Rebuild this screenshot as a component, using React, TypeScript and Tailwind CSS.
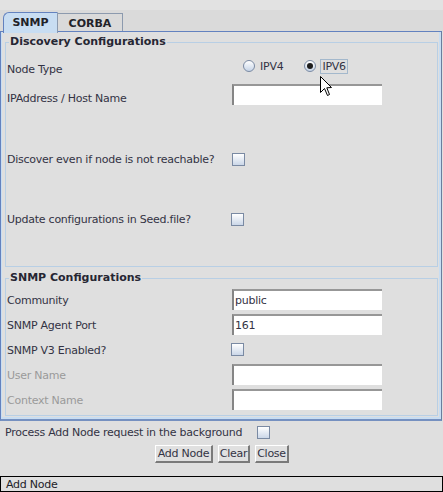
import React from "react";

const Checkbox = ({ className = "" }: { className?: string }) => (
  <div
    className={`w-[13px] h-[13px] shrink-0 border border-[#7a8aa3] bg-linear-to-b from-white to-[#cbd7e8] ${className}`}
  />
);

const Radio = ({ checked = false }: { checked?: boolean }) => (
  <div className="w-[12px] h-[12px] shrink-0 rounded-full border border-[#7a8aa3] bg-linear-to-b from-white to-[#c6d4e7] flex items-center justify-center">
    {checked && <div className="w-[6px] h-[6px] rounded-full bg-[#1e1e1e]" />}
  </div>
);

const Field = ({ value = "" }: { value?: string }) => (
  <div className="w-[150px] h-[21px] shrink-0 bg-white border-t-2 border-l-2 border-t-[#979797] border-l-[#858585] flex items-center pl-[1px] text-[#333344]">
    {value}
  </div>
);

const Row = ({
  label,
  children,
  className = "",
  labelClass = "",
}: {
  label: string;
  children: React.ReactNode;
  className?: string;
  labelClass?: string;
}) => (
  <div className={`flex items-center ${className}`}>
    <div className={`w-[226px] shrink-0 pl-[1px] whitespace-nowrap ${labelClass}`}>{label}</div>
    {children}
  </div>
);

export default function App() {
  return (
    <div className="relative w-[443px] h-[492px] overflow-hidden bg-[#dfdfdf] font-['DejaVu_Sans',Verdana,sans-serif] text-[11px] leading-[13px] tracking-[-0.25px] text-[#333344] flex flex-col">
      {/* top strip */}
      <div className="h-[10px] shrink-0 bg-[#e2e2e2]" />
      {/* tab row */}
      <div className="h-[21px] shrink-0 bg-[#dadada] flex items-end relative z-10">
        <div className="ml-[3px] -mb-[2px] w-[55px] h-[21px] rounded-tl-[6px] border-t border-l border-r border-t-[#6382bf] border-l-[#6382bf] border-r-[#8c9aae] bg-[#c8ddf2] flex items-center justify-center pb-[1px] font-bold tracking-normal text-[#222228]">
          SNMP
        </div>
        <div className="w-[65px] h-[18px] border-t border-r border-[#8c9aae] bg-[#dadada] flex items-center justify-center pt-[1px] font-bold tracking-normal text-[#222228]">
          CORBA
        </div>
      </div>

      {/* content panel */}
      <div className="w-[442px] h-[390px] shrink-0 border-t border-l border-r border-b-2 border-t-[#6382bf] border-l-[#6382bf] border-r-[#6a7d9e] border-b-[#7590c0] shadow-[inset_1px_0_0_#c8ddf2,inset_-2px_-2px_0_#c8ddf2]">
        <fieldset className="ml-[4px] mt-[3px] w-[433px] border border-[#b8cfe5] pb-[37px]">
          <legend className="ml-[3px] px-[1px] font-bold tracking-normal leading-[14px] text-[#262633]">
            Discovery Configurations
          </legend>
          <Row label="Node Type" className="mt-[7px] h-[20px]" labelClass="pt-[6px]">
            <div className="ml-[11px] flex items-center">
              <Radio />
              <span className="ml-[5px]">IPV4</span>
              <div className="ml-[21px]">
                <Radio checked />
              </div>
              <span className="ml-[4px] h-[15px] px-[1px] border border-[#a3b8cc] flex items-center">IPV6</span>
            </div>
          </Row>
          <Row label="IPAddress / Host Name" className="mt-[8px] h-[21px]" labelClass="pt-[8px]">
            <Field />
          </Row>
          <Row label="Discover even if node is not reachable?" className="mt-[44px] h-[20px]">
            <Checkbox />
          </Row>
          <Row label="Update configurations in Seed.file?" className="mt-[40px] h-[20px]">
            <Checkbox className="-ml-[1px]" />
          </Row>
        </fieldset>

        <fieldset className="ml-[4px] mt-[4px] w-[433px] border border-[#b8cfe5] pb-[5px]">
          <legend className="ml-[3px] px-[1px] font-bold tracking-normal leading-[14px] text-[#262633]">
            SNMP Configurations
          </legend>
          <Row label="Community" className="mt-[4px] h-[21px]" labelClass="pt-[2px]">
            <Field value="public" />
          </Row>
          <Row label="SNMP Agent Port" className="mt-[4px] h-[21px]" labelClass="pt-[2px]">
            <Field value="161" />
          </Row>
          <Row label="SNMP V3 Enabled?" className="mt-[4px] h-[21px]" labelClass="pt-[1px]">
            <Checkbox className="-ml-[1px]" />
          </Row>
          <Row label="User Name" className="mt-[4px] h-[21px]" labelClass="pt-[2px] text-[#9a9a9a]">
            <Field />
          </Row>
          <Row label="Context Name" className="mt-[4px] h-[21px]" labelClass="pt-[2px] text-[#9a9a9a]">
            <Field />
          </Row>
        </fieldset>
      </div>

      {/* background option */}
      <div className="mt-[5px] h-[13px] shrink-0 flex items-center">
        <span className="w-[257px] pl-[5px] whitespace-nowrap">Process Add Node request in the background</span>
        <Checkbox />
      </div>

      {/* buttons */}
      <div className="mt-[6px] h-[18px] shrink-0 flex justify-center gap-[5px] pl-[1px]">
        <button className="w-[58px] h-[18px] border-t border-l border-b-2 border-r-2 border-t-white border-l-white border-b-[#7a7a7a] border-r-[#7a7a7a] bg-[#e0e0e0] flex items-center justify-center text-[#333344]">
          Add Node
        </button>
        <button className="w-[32px] h-[18px] border-t border-l border-b-2 border-r-2 border-t-white border-l-white border-b-[#7a7a7a] border-r-[#7a7a7a] bg-[#e0e0e0] flex items-center justify-center text-[#333344]">
          Clear
        </button>
        <button className="w-[34px] h-[18px] border-t border-l border-b-2 border-r-2 border-t-white border-l-white border-b-[#7a7a7a] border-r-[#7a7a7a] bg-[#e0e0e0] flex items-center justify-center text-[#333344]">
          Close
        </button>
      </div>

      {/* status bar */}
      <div className="mt-[13px] h-[16px] shrink-0 border border-black flex items-center pl-[5px] text-[#222228]">
        Add Node
      </div>

      {/* mouse cursor */}
      <svg
        className="absolute left-[320px] top-[76px]"
        width="13"
        height="21"
        viewBox="0 0 13 21"
      >
        <path
          d="M0.5 0.5 L0.5 16.5 L4.5 12.5 L7.5 19.5 L9.5 18.5 L6.8 11.8 L11.5 11.5 Z"
          fill="white"
          stroke="black"
          strokeWidth="1"
          strokeLinejoin="miter"
        />
      </svg>
    </div>
  );
}
